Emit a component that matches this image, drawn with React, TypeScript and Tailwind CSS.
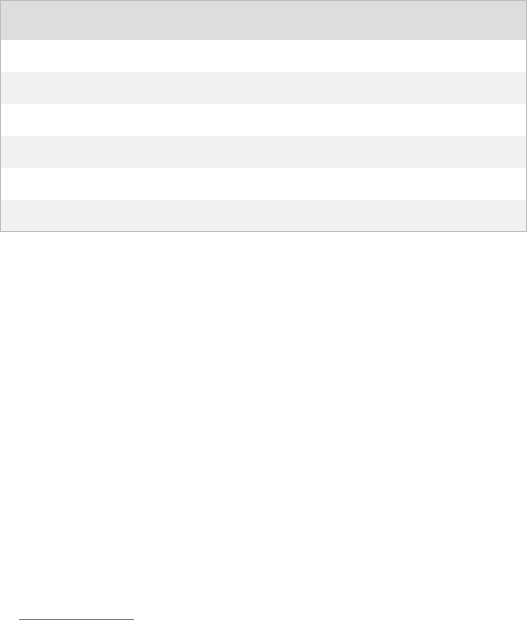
const rows = [0, 1, 2, 3, 4, 5];

export default function App() {
  return (
    <div className="flex flex-col bg-white font-['Liberation_Sans',sans-serif]">
      <div className="w-[527px] border border-[#bdbdbd]">
        <div className="h-[39px] bg-[#dddddd]" />
        {rows.map((r) => (
          <div
            key={r}
            className={
              (r % 2 === 0 ? "bg-white" : "bg-[#f1f1f1]") +
              " " +
              (r === 5 ? "h-[31px]" : "h-[32px]")
            }
          />
        ))}
      </div>
      <div className="mt-[387px] ml-[19px] h-px w-[115px] bg-[#9a7650]" />
    </div>
  );
}
